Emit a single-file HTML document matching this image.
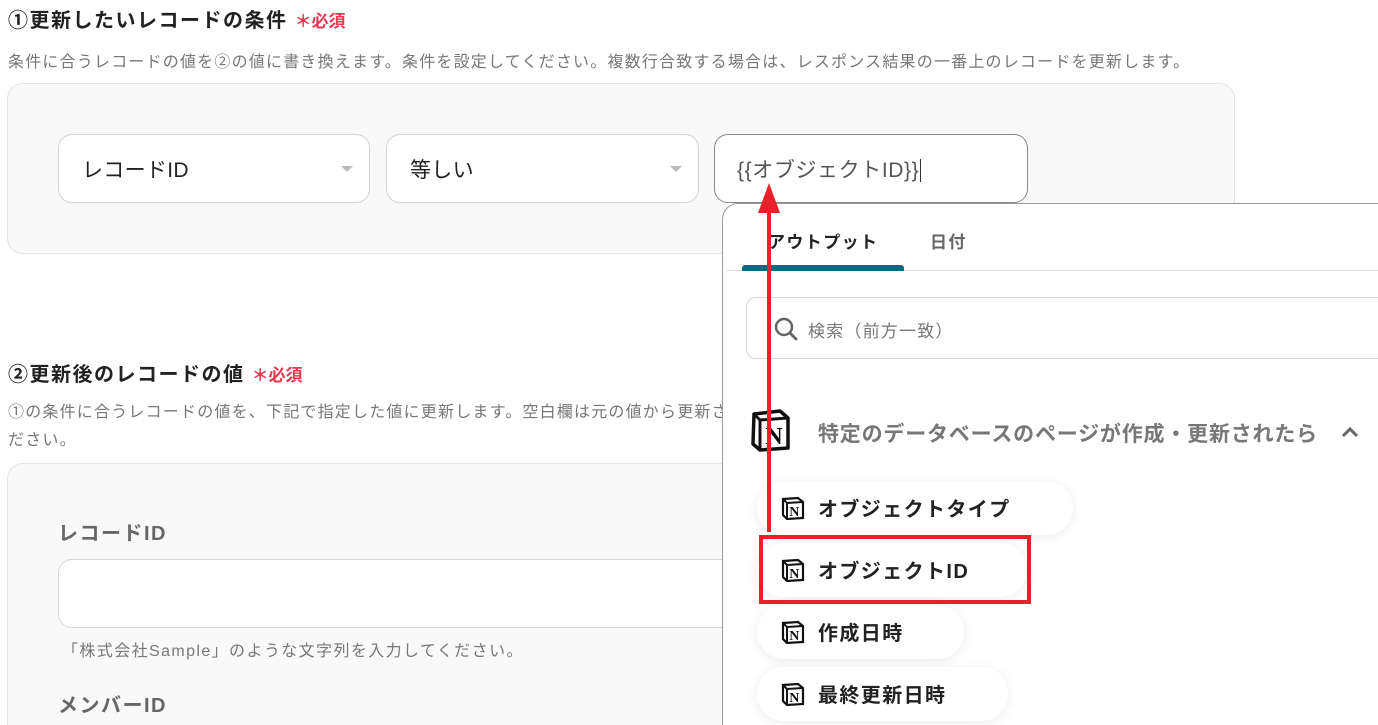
<!DOCTYPE html>
<html><head><meta charset="utf-8"><style>
*{box-sizing:border-box;margin:0;padding:0}
html,body{width:1378px;height:725px;overflow:hidden}
body{background:#fff;font-family:"Liberation Sans","Noto Sans CJK JP",sans-serif;position:relative;color:#222}
.a{position:absolute;white-space:nowrap}
.h{font-size:20px;font-weight:bold;color:#222;letter-spacing:1.5px}
.req{color:#e8384f;font-size:17px;font-weight:bold;letter-spacing:0}
.d{font-size:16px;color:#777;letter-spacing:1.2px}
.box{position:absolute;background:#f9f9f9;border:1px solid #e4e4e4;border-radius:16px}
.sel{position:absolute;background:#fff;border:1px solid #d3d3d3;border-radius:14px;height:69px;font-size:21px;color:#222;padding:19px 23px;letter-spacing:0.3px}
.tri{position:absolute;right:16px;top:31px;border-left:6px solid transparent;border-right:6px solid transparent;border-top:6px solid #bbb}
.pill{position:absolute;left:757px;height:54px;background:#fff;border-radius:27px;box-shadow:0 2px 12px rgba(0,0,0,.08);font-size:20px;font-weight:bold;color:#222;padding:12px 0 0 61px;letter-spacing:1.4px}
.ni{position:absolute;left:24px;top:15px;width:24px;height:24px}
</style></head><body>
<div class="a h" style="left:8px;top:4px">①更新したいレコードの条件 <span class="req">＊必須</span></div>
<div class="a d" style="left:8px;top:48px">条件に合うレコードの値を②の値に書き換えます。条件を設定してください。複数行合致する場合は、レスポンス結果の一番上のレコードを更新します。</div>
<div class="box" style="left:7px;top:83px;width:1228px;height:171px"></div>
<div class="sel" style="left:58px;top:134px;width:312px">レコードID<div class="tri"></div></div>
<div class="sel" style="left:386px;top:134px;width:313px">等しい<div class="tri"></div></div>
<div class="sel" style="left:714px;top:134px;width:314px;border-color:#888;color:#555;padding-left:22px;letter-spacing:0.6px">{{オブジェクトID}}<span style="border-left:1px solid #333;margin-left:1px"></span></div>

<div class="a h" style="left:8px;top:358px">②更新後のレコードの値 <span class="req">＊必須</span></div>
<div class="a d" style="left:8px;top:399px;line-height:28px">①の条件に合うレコードの値を、下記で指定した値に更新します。空白欄は元の値から更新さ<br>ださい。</div>
<div class="box" style="left:7px;top:463px;width:1300px;height:262px;border-bottom:none;border-radius:16px 16px 0 0"></div>
<div class="a" style="left:58px;top:517px;font-size:20px;font-weight:bold;color:#666;letter-spacing:1.5px">レコードID</div>
<div class="a" style="left:58px;top:559px;width:700px;height:69px;background:#fff;border:1px solid #d3d6dc;border-radius:14px"></div>
<div class="a d" style="left:62px;top:637px;font-size:16px;letter-spacing:1.4px">「株式会社Sample」のような文字列を入力してください。</div>
<div class="a" style="left:58px;top:689px;font-size:20px;font-weight:bold;color:#666;letter-spacing:1.5px">メンバーID</div>

<div class="a" style="left:722px;top:203px;width:656px;height:522px;background:#fff;border:1px solid #999;border-right:none;border-bottom:none;border-radius:16px 0 0 0"></div>
<div class="a" style="left:768px;top:228px;font-size:17px;font-weight:bold;color:#222;letter-spacing:1.4px">アウトプット</div>
<div class="a" style="left:930px;top:228px;font-size:17px;font-weight:bold;color:#666;letter-spacing:1.4px">日付</div>
<div class="a" style="left:727px;top:270px;width:651px;height:1px;background:#ddd"></div>
<div class="a" style="left:742px;top:265px;width:162px;height:6px;background:#0e6a80;border-radius:3px 3px 0 0"></div>
<div class="a" style="left:746px;top:297px;width:632px;height:62px;border:1px solid #d6d6d6;border-right:none;border-radius:10px 0 0 10px"></div>
<svg class="a" style="left:773px;top:316px" width="26" height="26" viewBox="0 0 26 26"><circle cx="11" cy="11" r="8" fill="none" stroke="#666" stroke-width="2.5"/><line x1="17" y1="17" x2="23" y2="23" stroke="#666" stroke-width="2.8" stroke-linecap="round"/></svg>
<div class="a" style="left:808px;top:317px;font-size:17px;color:#777;letter-spacing:1.2px">検索（前方一致）</div>
<svg class="a" style="left:750px;top:408px" width="42" height="44" viewBox="0 0 42 44"><path d="M4 6 L30 3 L38 10 L38 40 L10 42 L3 36 Z" fill="#fff" stroke="#111" stroke-width="3.5" stroke-linejoin="round"/><path d="M4 6 L10 12 L38 10 M10 12 L10 42" fill="none" stroke="#111" stroke-width="3"/><text x="24" y="36" font-family="Liberation Serif,serif" font-weight="bold" font-size="24" text-anchor="middle" fill="#111">N</text></svg>
<div class="a" style="left:818px;top:418px;font-size:21px;font-weight:bold;color:#777;letter-spacing:0.8px">特定のデータベースのページが作成・更新されたら</div>
<svg class="a" style="left:1340px;top:425px" width="20" height="14" viewBox="0 0 20 14"><path d="M3 11 L10 4 L17 11" fill="none" stroke="#666" stroke-width="3"/></svg>

<div class="pill" style="top:481px;width:316px"><svg class="ni" viewBox="0 0 24 24"><path d="M2 3 L17 2 L22 6 L22 22 L6 23 L2 19 Z" fill="#fff" stroke="#111" stroke-width="2.2"/><path d="M2 3 L6 7 L22 6 M6 7 L6 23" fill="none" stroke="#111" stroke-width="2"/><text x="14" y="20" font-family="Liberation Serif,serif" font-weight="bold" font-size="14" text-anchor="middle" fill="#111">N</text></svg>オブジェクトタイプ</div>
<div class="pill" style="top:543px;width:270px"><svg class="ni" viewBox="0 0 24 24"><path d="M2 3 L17 2 L22 6 L22 22 L6 23 L2 19 Z" fill="#fff" stroke="#111" stroke-width="2.2"/><path d="M2 3 L6 7 L22 6 M6 7 L6 23" fill="none" stroke="#111" stroke-width="2"/><text x="14" y="20" font-family="Liberation Serif,serif" font-weight="bold" font-size="14" text-anchor="middle" fill="#111">N</text></svg>オブジェクトID</div>
<div class="pill" style="top:605px;width:207px"><svg class="ni" viewBox="0 0 24 24"><path d="M2 3 L17 2 L22 6 L22 22 L6 23 L2 19 Z" fill="#fff" stroke="#111" stroke-width="2.2"/><path d="M2 3 L6 7 L22 6 M6 7 L6 23" fill="none" stroke="#111" stroke-width="2"/><text x="14" y="20" font-family="Liberation Serif,serif" font-weight="bold" font-size="14" text-anchor="middle" fill="#111">N</text></svg>作成日時</div>
<div class="pill" style="top:667px;width:251px;height:54px"><svg class="ni" viewBox="0 0 24 24"><path d="M2 3 L17 2 L22 6 L22 22 L6 23 L2 19 Z" fill="#fff" stroke="#111" stroke-width="2.2"/><path d="M2 3 L6 7 L22 6 M6 7 L6 23" fill="none" stroke="#111" stroke-width="2"/><text x="14" y="20" font-family="Liberation Serif,serif" font-weight="bold" font-size="14" text-anchor="middle" fill="#111">N</text></svg>最終更新日時</div>
<div class="a" style="left:759px;top:535px;width:272px;height:69px;border:4px solid #e8202a"></div>
<svg class="a" style="left:755px;top:180px" width="30" height="355" viewBox="0 0 30 355"><line x1="14" y1="30" x2="14" y2="352" stroke="#e8202a" stroke-width="4"/><path d="M3 33 L14 3 L25 33 Z" fill="#e8202a"/></svg>
</body></html>
